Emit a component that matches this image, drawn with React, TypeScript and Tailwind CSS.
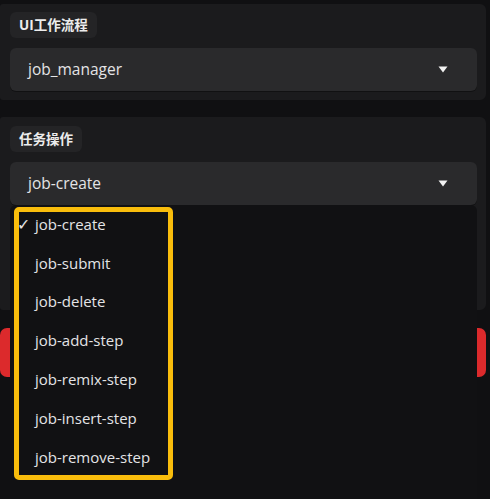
import React from "react";

const items = [
  "job-create",
  "job-submit",
  "job-delete",
  "job-add-step",
  "job-remix-step",
  "job-insert-step",
  "job-remove-step",
];

function Caret() {
  return (
    <svg width="10" height="7" viewBox="0 0 10 7" className="block">
      <path d="M0.5 0.5 L9.5 0.5 L5 6.5 Z" fill="#f2f2f2" />
    </svg>
  );
}

function Select({ value }: { value: string }) {
  return (
    <div className="h-[43px] mx-[10px] mr-[9px] rounded-[6px] bg-[#2a2a2c] flex items-center justify-between pl-[18px] pr-[29px] shadow-[0_1px_0_rgba(0,0,0,0.35)]">
      <span className="text-[15.5px] text-[#e4e4e6]">{value}</span>
      <Caret />
    </div>
  );
}

export default function App() {
  return (
    <div
      className="relative w-[490px] h-[499px] overflow-hidden bg-[#101012] pt-[4px]"
      style={{ fontFamily: '"Open Sans", "Noto Sans", "Noto Sans CJK SC", sans-serif' }}
    >
      <div className="w-[486px] h-[96px] rounded-r-[6px] rounded-l-[3px] bg-[#1b1b1d] pt-[8px]">
        <div className="ml-[10px] inline-flex h-[26px] items-center rounded-[6px] bg-[#242426] px-[9px] text-[13.5px] font-bold text-[#ececec]">
          UI工作流程
        </div>
        <div className="mt-[10px]">
          <Select value="job_manager" />
        </div>
      </div>

      <div className="mt-[17px] w-[486px] h-[193px] rounded-r-[6px] rounded-l-[3px] bg-[#1b1b1d] pt-[9px]">
        <div className="ml-[10px] inline-flex h-[26px] items-center rounded-[6px] bg-[#242426] px-[9px] text-[13.5px] font-bold text-[#ececec]">
          任务操作
        </div>
        <div className="mt-[10px]">
          <Select value="job-create" />
        </div>
      </div>

      <div className="mt-[18px] w-[486px] h-[49px] rounded-[7px] bg-[#dc2a2c]" />

      <div className="absolute left-[10px] top-[205px] w-[467px] h-[300px] rounded-[6px] bg-[#111113]">
        <div className="absolute left-[4px] top-[2px] w-[159px] h-[273px] rounded-[5px] border-[5px] border-[#f9bd0c] bg-[#111113] flex flex-col gap-[12.8px] pt-[-1px]">
          {items.map((it, i) => (
            <div key={it} className={`relative h-[26px] flex items-center pl-[16px] text-[15px] text-[#e4e4e6] ${i === 0 ? "-mt-[1px]" : ""}`}>
              {i === 0 && (
                <span className="absolute left-[-2px] text-[16px] font-light text-[#e4e4e6]" style={{ fontFamily: '"Noto Sans", "DejaVu Sans", sans-serif' }}>
                  ✓
                </span>
              )}
              {it}
            </div>
          ))}
        </div>
      </div>
    </div>
  );
}
